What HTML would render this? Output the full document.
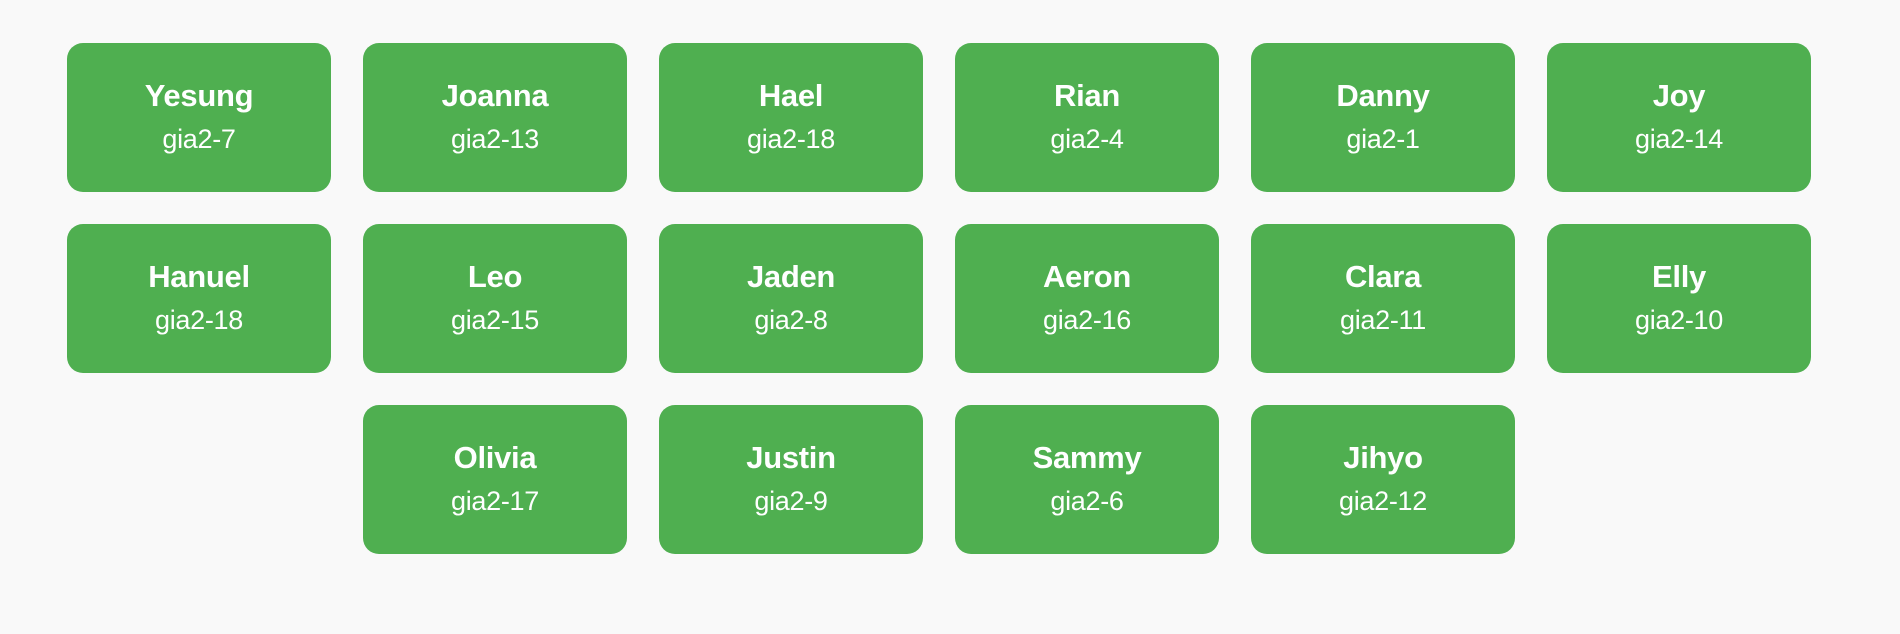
<!DOCTYPE html>
<html><head><meta charset="utf-8"><style>
html,body{margin:0;padding:0;background:#f9f9f9;width:1900px;height:634px;overflow:hidden}
.grid{position:absolute;left:67px;top:43px;width:1744px;display:flex;flex-wrap:wrap;justify-content:center;gap:32px}
.c{width:264px;height:149px;background:#4faf50;border-radius:16px;box-sizing:border-box;padding-top:35px;text-align:center;color:#fff;font-family:"Liberation Sans",Arial,sans-serif}
.n{font-weight:bold;font-size:31px;line-height:36px;letter-spacing:-0.3px}
.s{font-size:27px;line-height:30px;margin-top:10px;letter-spacing:-0.3px}
</style></head><body><div class="grid">
<div class="c"><div class="n">Yesung</div><div class="s">gia2-7</div></div>
<div class="c"><div class="n">Joanna</div><div class="s">gia2-13</div></div>
<div class="c"><div class="n">Hael</div><div class="s">gia2-18</div></div>
<div class="c"><div class="n">Rian</div><div class="s">gia2-4</div></div>
<div class="c"><div class="n">Danny</div><div class="s">gia2-1</div></div>
<div class="c"><div class="n">Joy</div><div class="s">gia2-14</div></div>
<div class="c"><div class="n">Hanuel</div><div class="s">gia2-18</div></div>
<div class="c"><div class="n">Leo</div><div class="s">gia2-15</div></div>
<div class="c"><div class="n">Jaden</div><div class="s">gia2-8</div></div>
<div class="c"><div class="n">Aeron</div><div class="s">gia2-16</div></div>
<div class="c"><div class="n">Clara</div><div class="s">gia2-11</div></div>
<div class="c"><div class="n">Elly</div><div class="s">gia2-10</div></div>
<div class="c"><div class="n">Olivia</div><div class="s">gia2-17</div></div>
<div class="c"><div class="n">Justin</div><div class="s">gia2-9</div></div>
<div class="c"><div class="n">Sammy</div><div class="s">gia2-6</div></div>
<div class="c"><div class="n">Jihyo</div><div class="s">gia2-12</div></div>
</div></body></html>
